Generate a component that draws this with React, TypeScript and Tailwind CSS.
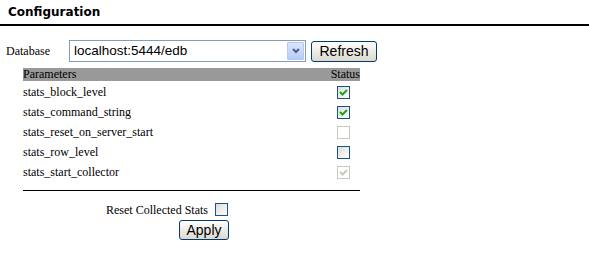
import React from 'react'

const params = [
  { name: 'stats_block_level', checked: true, disabled: false },
  { name: 'stats_command_string', checked: true, disabled: false },
  { name: 'stats_reset_on_server_start', checked: false, disabled: true },
  { name: 'stats_row_level', checked: false, disabled: false },
  { name: 'stats_start_collector', checked: true, disabled: true },
]

function XpCheck({ checked, disabled }: { checked?: boolean; disabled?: boolean }) {
  return (
    <span
      className={
        disabled
          ? 'inline-flex w-[13px] h-[13px] items-center justify-center border border-[#cac8bb] bg-white'
          : 'inline-flex w-[13px] h-[13px] items-center justify-center border border-[#1c5180] bg-gradient-to-br from-[#dcdcd7] to-white'
      }
    >
      {checked && (
        <svg width="9" height="9" viewBox="0 0 9 9">
          <path
            d="M1 4 L3.5 6.5 L8 2"
            fill="none"
            stroke={disabled ? '#cac8bb' : '#21a121'}
            strokeWidth="2"
          />
        </svg>
      )}
    </span>
  )
}

function XpButton({ children, className }: { children: React.ReactNode; className?: string }) {
  return (
    <button
      className={
        'border border-[#003c74] rounded-[3px] bg-gradient-to-b from-white to-[#dcd9cd] text-[14px] leading-none text-black font-["Liberation_Sans",Arial,sans-serif] ' +
        (className ?? '')
      }
    >
      {children}
    </button>
  )
}

export default function App() {
  return (
    <div className="w-[589px] h-[262px] bg-white text-black font-['Liberation_Serif','Times_New_Roman',serif]">
      {/* Title */}
      <div className="h-[26px] border-b-2 border-black pl-[8px] pt-[5px]">
        <h1 className="text-[12px] font-bold font-['DejaVu_Sans',Verdana,sans-serif] leading-[14px]">
          Configuration
        </h1>
      </div>

      {/* Database selector */}
      <div className="flex items-center mt-[14px] h-[22px]">
        <span className="w-[69px] pl-[6px] text-[12px]">Database</span>
        <div className="flex w-[237px] h-[22px] border border-[#7f9db9] bg-white">
          <span className="flex-1 pl-[4px] text-[13.5px] leading-[20px] font-['Liberation_Sans',Arial,sans-serif]">
            localhost:5444/edb
          </span>
          <span className="w-[17px] h-[18px] m-[1px] flex items-center justify-center border border-[#b5c7ed] rounded-[1px] bg-gradient-to-b from-[#dbe6fd] to-[#b7cbf5]">
            <svg width="8" height="6" viewBox="0 0 8 6">
              <path d="M1 1 L4 4 L7 1" fill="none" stroke="#4d6185" strokeWidth="2" />
            </svg>
          </span>
        </div>
        <XpButton className="ml-[5px] w-[66px] h-[21px]">Refresh</XpButton>
      </div>

      {/* Parameters table */}
      <div className="ml-[23px] w-[337px] mt-[6px]">
        <div className="flex justify-between h-[13px] bg-[#999999] text-[12px] leading-[13px]">
          <span>Parameters</span>
          <span>Status</span>
        </div>
        <div className="pt-[1px]">
          {params.map((p) => (
            <div key={p.name} className="flex items-center h-[20px] text-[12px]">
              <span className="flex-1">{p.name}</span>
              <span className="w-[34px] flex justify-center">
                <XpCheck checked={p.checked} disabled={p.disabled} />
              </span>
            </div>
          ))}
        </div>
        <div className="mt-[8px] border-t border-black" />
      </div>

      {/* Reset + apply */}
      <div className="flex items-center h-[13px] mt-[12px] pl-[106px] text-[12px]">
        <span>Reset Collected Stats</span>
        <span className="ml-[7px] flex">
          <XpCheck />
        </span>
      </div>
      <div className="pl-[179px] mt-[4px] flex">
        <XpButton className="w-[50px] h-[20px]">Apply</XpButton>
      </div>
    </div>
  )
}
